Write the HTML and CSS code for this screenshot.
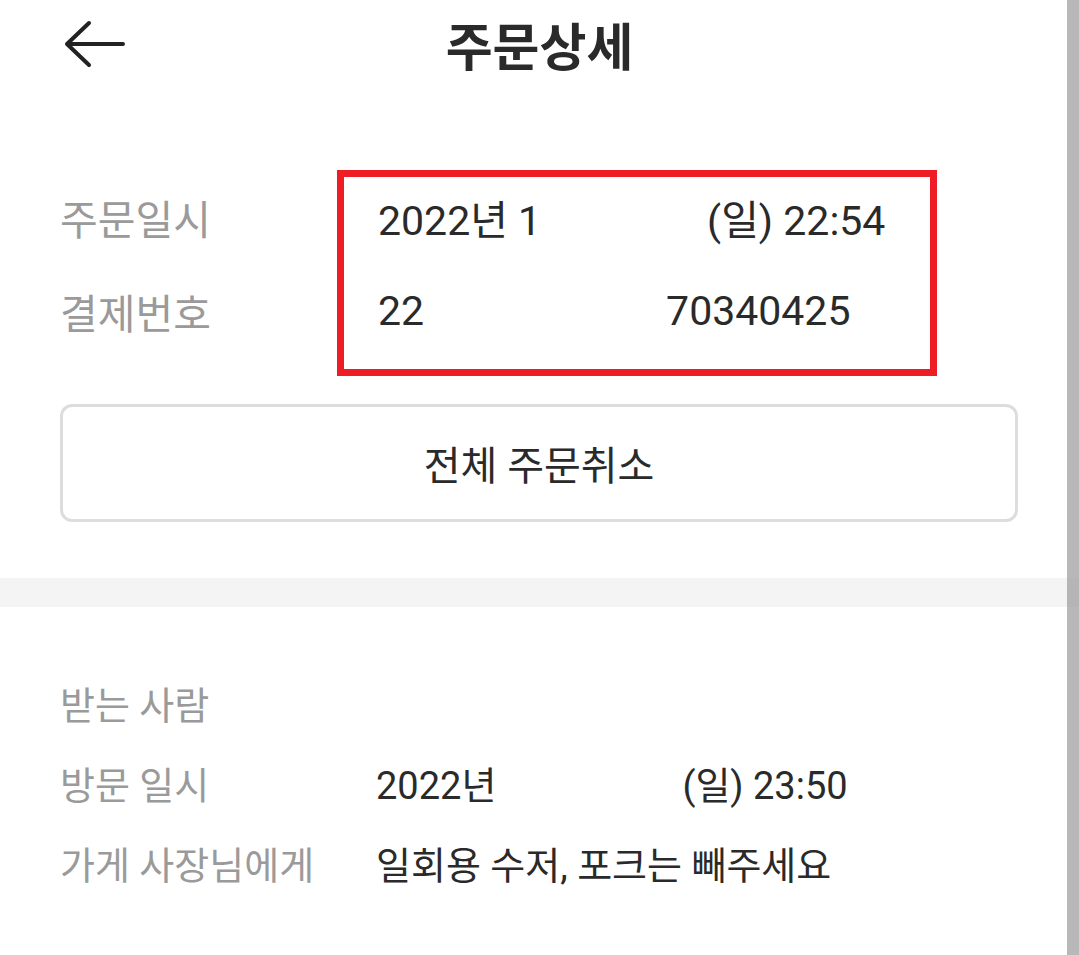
FILE: index.html
```html
<!DOCTYPE html>
<html lang="ko">

<head>
    <meta charset="UTF-8">
    <meta name="viewport" content="width=device-width, initial-scale=1.0">
    <title>주문상세</title>
    <link rel="stylesheet" href="styles.css">
</head>

<body>
    <div class="page">
        <header class="top-bar">
            <div class="back">
                <svg width="64" height="48" viewBox="0 0 64 48">
                    <path d="M61 24H5M27 3L5 24L27 45" fill="none" stroke="#222" stroke-width="4" stroke-linecap="round" stroke-linejoin="round" />
                </svg>
            </div>
            <h1>주문상세</h1>
            <div></div>
        </header>

        <section class="order-info">
            <div class="info-grid">
                <span class="label">주문일시</span>
                <span class="value">2022년 1<span class="gap gap-date"></span>(일) 22:54</span>

                <span class="label">결제번호</span>
                <span class="value">22<span class="gap gap-pay"></span>70340425</span>
            </div>

            <!-- annotation frame drawn over the screenshot -->
            <div class="mark"></div>

            <button class="cancel-btn">전체 주문취소</button>
        </section>

        <div class="divider"></div>

        <section class="visit-info">
            <div class="info-grid small">
                <span class="label">받는 사람</span>
                <span class="value"></span>

                <span class="label">방문 일시</span>
                <span class="value">2022년<span class="gap gap-visit"></span>(일) 23:50</span>

                <span class="label">가게 사장님에게</span>
                <span class="value">일회용 수저, 포크는 빼주세요</span>
            </div>
        </section>

        <div class="scroll-thumb"></div>
    </div>
</body>

</html>
```

FILE: styles.css
```css
body {
    margin: 0;
    padding: 0;
    background-color: #fff;
    font-family: Roboto, "Noto Sans CJK KR", sans-serif;
    color: #2a2a2a;
    overflow: hidden;
}

.page {
    position: relative;
    width: 1079px;
    height: 955px;
}

.top-bar {
    display: grid;
    grid-template-columns: 1fr auto 1fr;
    align-items: center;
    height: 88px;
}

.back {
    padding-left: 62px;
    display: flex;
    align-items: center;
}

.top-bar h1 {
    margin: 0;
    font-size: 51px;
    font-weight: 700;
    color: #2a2a2a;
}

.order-info {
    position: relative;
    padding: 82px 61px 56px 60px;
}

.info-grid {
    display: grid;
    grid-template-columns: 318px 1fr;
    grid-auto-rows: 94px;
    align-items: center;
    font-size: 41px;
}

.info-grid.small {
    grid-template-columns: 316px 1fr;
    grid-auto-rows: 80px;
    font-size: 38px;
}

.label {
    color: #9a9a9a;
    white-space: nowrap;
}

.value {
    color: #2a2a2a;
    white-space: nowrap;
}

.gap {
    display: inline-block;
}

.gap-date {
    width: 166px;
}

.gap-pay {
    width: 242px;
}

.gap-visit {
    width: 186px;
}

.mark {
    position: absolute;
    left: 337px;
    top: 82px;
    width: 586px;
    height: 192px;
    border: 7px solid #ee1c25;
}

.cancel-btn {
    display: block;
    width: 100%;
    height: 118px;
    margin-top: 46px;
    background-color: #fff;
    border: 3px solid #dddddd;
    border-radius: 12px;
    font-family: Roboto, "Noto Sans CJK KR", sans-serif;
    font-size: 40px;
    color: #2a2a2a;
}

.divider {
    height: 29px;
    background-color: #f4f4f4;
}

.visit-info {
    padding: 55px 60px 0 60px;
}

.scroll-thumb {
    position: absolute;
    top: 0;
    right: 0;
    width: 12px;
    height: 955px;
    background-color: rgba(150, 150, 150, 0.68);
}
```
